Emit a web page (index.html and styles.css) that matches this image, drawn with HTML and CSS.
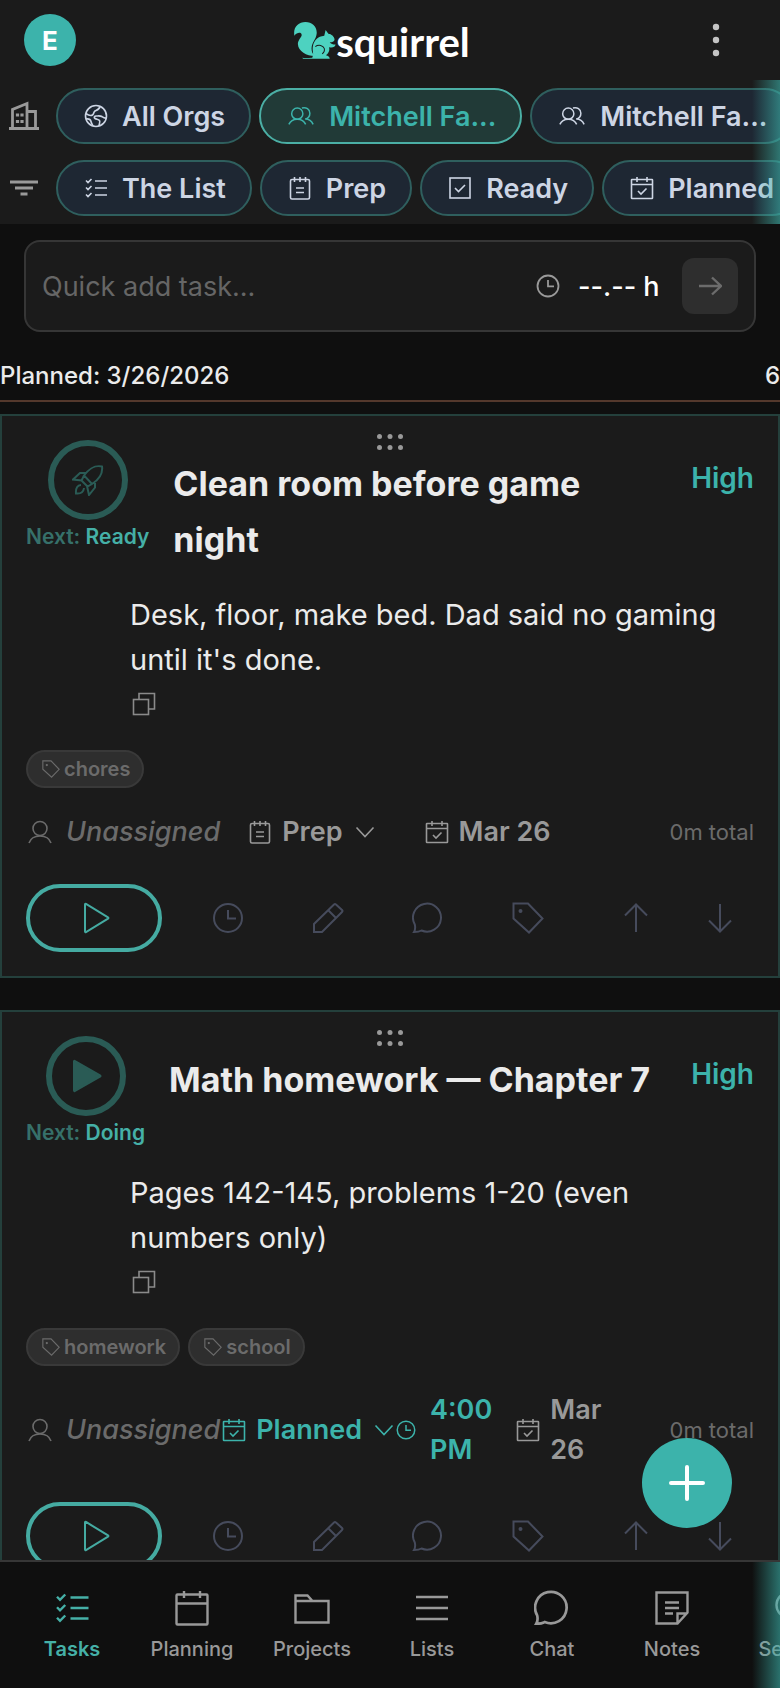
FILE: index.html
```html
<!DOCTYPE html>
<html lang="en">
<head>
  <meta charset="UTF-8">
  <meta name="viewport" content="width=device-width, initial-scale=1.0">
  <title>squirrel - Tasks</title>
  <link rel="stylesheet" href="styles.css">
</head>
<body>

  <!-- Icon sprite -->
  <svg class="sprite" aria-hidden="true">
    <symbol id="i-buildings" viewBox="0 0 32 32"><path d="M1 28.5h30M4.500 28V9.500L19 3.500V28M19 11.500h8.500V28"/><path d="M9.500 13.500v3M14 13.500v3M9.500 20v3M14 20v3" stroke-width="3.200"/></symbol>
    <symbol id="i-filter" viewBox="0 0 32 32"><path d="M2 10h28M7 16h18M12.500 22h7"/></symbol>
    <symbol id="i-globe" viewBox="0 0 24 24"><circle cx="12" cy="12" r="10.500"/><path d="M16 2.500c-.5 3-3 3.500-5 4.500-1.500 1-1 3-2.500 4S4 11 1.800 9.500M22.300 14c-2 .5-3-.5-4.500-1.500s-4-.5-5.800-.5c-1.500 0-2.500 1.500-1 2.500s3.500.5 4.500 2-.5 3.500-.5 5.500M2 15c3-.5 4.500.5 5 2.500.3 1.500 1.500 3 2 4.500"/></symbol>
    <symbol id="i-people" viewBox="0 0 30 24"><circle cx="11" cy="9.500" r="6"/><path d="M2 21c1.500-3.500 5-5.500 9-5.500s7.500 2 9 5.500M16 3.500c4.500-1.500 8.500 1.500 8.500 5.500 0 3-2 5.500-5 6.200 4 0 7 2.300 8.500 5.800"/></symbol>
    <symbol id="i-checklist" viewBox="0 0 24 24"><path d="M11 5h12M11 12h12M11 19h12M2 4.500l2 2L7.500 3M2 11.500l2 2L7.500 10M2 18.500l2 2L7.500 17"/></symbol>
    <symbol id="i-notepad" viewBox="0 0 24 24"><rect x="2.500" y="3.500" width="19" height="19.500" rx="1.500"/><path d="M6.500 1v5M12 1v5M17.500 1v5M8 12h8M8 16.500h8"/></symbol>
    <symbol id="i-checkbox" viewBox="0 0 24 24"><rect x="2" y="2" width="20" height="20"/><path d="M7 12l3.500 3.500L17 9"/></symbol>
    <symbol id="i-calcheck" viewBox="0 0 24 24"><rect x="1.500" y="3.500" width="21" height="19" rx=".5"/><path d="M1.500 8.500h21M7 1v5M17 1v5M8 15l3 3 5.500-5.500"/></symbol>
    <symbol id="i-calendar" viewBox="0 0 36 36"><rect x="2.500" y="4.500" width="31" height="30" rx="1"/><path d="M2.500 13.500h31M10 1v7M26 1v7"/></symbol>
    <symbol id="i-clock" viewBox="0 0 32 32"><circle cx="16" cy="16" r="14"/><path d="M16 8v8.500h8"/></symbol>
    <symbol id="i-right" viewBox="0 0 24 24"><path d="M1 12h22M14 3.500l9 8.500-9 8.500"/></symbol>
    <symbol id="i-rocket" viewBox="0 0 32 32"><path d="M30 2.500c-7-1.500-12 1-18 9l8 8.500c8-5 11-10.500 10-17.500zM14 9H8l-7 6.500 9 1M23 17v6.500L17 31l-2-9M9 21c-3.500 0-5.500 3-5 8.500 5 .5 7.500-1.500 8-5.500M12 11.500L9.500 16.500l6 6 4.500-2.500"/></symbol>
    <symbol id="i-playfill" viewBox="0 0 32 36"><path d="M4 3.500v29c0 .5.500.8 1 .5l25-14.300c.7-.4.700-1 0-1.400L5 3c-.5-.3-1 0-1 .5z" fill="currentColor"/></symbol>
    <symbol id="i-play" viewBox="0 0 32 32"><path d="M7 2.500v27c0 .5.400.8 1 .5l22-13.300c.6-.4.600-1 0-1.400L8 2c-.6-.3-1 0-1 .5z"/></symbol>
    <symbol id="i-copy" viewBox="0 0 24 24"><rect x="1.500" y="7.500" width="15" height="15"/><path d="M7 7V1.500h15.500V17h-6"/></symbol>
    <symbol id="i-tag" viewBox="0 0 32 32"><path d="M1.500 1.500H16l14.500 15L17 30.500 1.500 16.500z"/><circle cx="8.500" cy="9" r="1.300" fill="currentColor" stroke="none"/><circle cx="8.500" cy="9" r="1"/></symbol>
    <symbol id="i-user" viewBox="0 0 24 24"><circle cx="12" cy="8.500" r="7"/><path d="M1 23c1.500-4.500 5.500-7 11-7s9.500 2.500 11 7"/></symbol>
    <symbol id="i-chevron" viewBox="0 0 24 24"><path d="M3.500 7.500L12 16.500l8.500-9"/></symbol>
    <symbol id="i-pencil" viewBox="0 0 32 32"><path d="M2 30v-8L22 2.500c.7-.7 1.300-.7 2 0L30 8c.7.700.7 1.300 0 2L10 30zM16.500 8.500l7 7"/></symbol>
    <symbol id="i-chat" viewBox="0 0 32 32"><path d="M2 30c1.500-2.500 1.500-4.500.8-7.500A14 14 0 1 1 9.500 28.500C7 30 5 30 2 30z"/></symbol>
    <symbol id="i-up" viewBox="0 0 32 32"><path d="M16 30V2.500M5 13.500l11-11 11 11"/></symbol>
    <symbol id="i-down" viewBox="0 0 32 32"><path d="M16 2v27.500M5 18.500l11 11 11-11"/></symbol>
    <symbol id="i-folder" viewBox="0 0 36 36"><path d="M1.500 32.500v-27h12l5 5.500h16v21.500zM1.500 11h17"/></symbol>
    <symbol id="i-lines" viewBox="0 0 36 36"><path d="M2 7h32M2 18h32M2 29h32"/></symbol>
    <symbol id="i-note" viewBox="0 0 36 36"><path d="M2.500 33.500v-31h31v20l-10 11zM23.500 33v-9.500h9.500M11 12.500h14M11 18h14M11 23.500h8"/></symbol>
    <symbol id="i-search" viewBox="0 0 36 36"><circle cx="15" cy="15" r="12.500"/><path d="M24 24l10 10"/></symbol>
    <symbol id="i-plus" viewBox="0 0 36 36"><path d="M18 2v32M2 18h32"/></symbol>
    <symbol id="i-grip" viewBox="0 0 28 18"><g fill="currentColor" stroke="none"><circle cx="3.500" cy="3.500" r="2.500"/><circle cx="14" cy="3.500" r="2.500"/><circle cx="24.500" cy="3.500" r="2.500"/><circle cx="3.500" cy="14.500" r="2.500"/><circle cx="14" cy="14.500" r="2.500"/><circle cx="24.500" cy="14.500" r="2.500"/></g></symbol>
    <symbol id="i-more" viewBox="0 0 8 34"><g fill="currentColor" stroke="none"><circle cx="4" cy="4" r="3.200"/><circle cx="4" cy="17" r="3.200"/><circle cx="4" cy="30" r="3.200"/></g></symbol>
  </svg>

  <!-- Top bar -->
  <header class="topbar">
    <button class="avatar" type="button">E</button>
    <div class="brand">
      <svg class="brand-mark" viewBox="0 0 122 108" aria-hidden="true">
        <path d="M1 40C-4 16 12 0 33 0c20 0 34 13 33 33-1 17-14 26-15 43-.5 10 3 17 9 23C37 99 12 86 11 64c0-12 12-20 11-27-1-8-14-7-21 3z"/>
        <path d="M24 104c8 2 19 0 29 0 6-13-1-19 2-34 3-16 14-28 33-30l4-17 8 11c9 1 17 8 18 16 .5 7-8 9-14 9 3 5 9 7 17 7-1 8-9 10-19 8 3 10-2 18-9 23 6 1 11 5 11 10H26z"/>
        <path class="brand-cut" d="M62 72c9-7 23-4 26 5 2 7-1 12-6 16"/>
      </svg>
      <span class="brand-name">squirrel</span>
    </div>
    <button class="more" type="button" aria-label="More"><svg><use href="#i-more"/></svg></button>
  </header>

  <!-- Org and stage filters -->
  <section class="filters">
    <div class="filter-row">
      <svg class="row-icon"><use href="#i-buildings"/></svg>
      <button class="pill" type="button"><svg><use href="#i-globe"/></svg>All Orgs</button>
      <button class="pill active" type="button"><svg class="wide"><use href="#i-people"/></svg>Mitchell Fa...</button>
      <button class="pill" type="button"><svg class="wide"><use href="#i-people"/></svg>Mitchell Fa...</button>
    </div>
    <div class="filter-row">
      <svg class="row-icon"><use href="#i-filter"/></svg>
      <button class="pill" type="button"><svg><use href="#i-checklist"/></svg>The List</button>
      <button class="pill" type="button"><svg><use href="#i-notepad"/></svg>Prep</button>
      <button class="pill" type="button"><svg><use href="#i-checkbox"/></svg>Ready</button>
      <button class="pill" type="button"><svg><use href="#i-calcheck"/></svg>Planned</button>
    </div>
  </section>

  <main class="content">
    <form class="quick-add">
      <input class="quick-title" type="text" placeholder="Quick add task..." aria-label="Quick add task">
      <label class="quick-time">
        <svg><use href="#i-clock"/></svg>
        <input type="text" value="--.-- h" aria-label="Hours">
      </label>
      <button type="button" aria-label="Add"><svg><use href="#i-right"/></svg></button>
    </form>

    <div class="group-head">
      <h2>Planned: 3/26/2026</h2>
      <span>6</span>
    </div>

    <article class="task">
      <svg class="grip"><use href="#i-grip"/></svg>
      <div class="task-head">
        <div class="next">
          <button type="button" aria-label="Move to Ready"><svg><use href="#i-rocket"/></svg></button>
          <span class="next-label">Next: <b>Ready</b></span>
        </div>
        <h3>Clean room before game night</h3>
        <span class="priority">High</span>
      </div>
      <div class="task-desc">
        <p>Desk, floor, make bed. Dad said no gaming until it's done.</p>
        <button type="button" aria-label="Copy"><svg><use href="#i-copy"/></svg></button>
      </div>
      <div class="tags">
        <span class="tag"><svg><use href="#i-tag"/></svg>chores</span>
      </div>
      <div class="meta">
        <span class="assignee"><svg><use href="#i-user"/></svg>Unassigned</span>
        <label class="stage spaced">
          <svg><use href="#i-notepad"/></svg>
          <select aria-label="Stage"><option>Prep</option></select>
          <svg class="chevron"><use href="#i-chevron"/></svg>
        </label>
        <span class="due roomy"><svg><use href="#i-calcheck"/></svg>Mar 26</span>
        <span class="total">0m total</span>
      </div>
      <div class="actions">
        <button class="play" type="button" aria-label="Start"><svg><use href="#i-play"/></svg></button>
        <div class="tools">
          <button type="button" aria-label="Time"><svg><use href="#i-clock"/></svg></button>
          <button type="button" aria-label="Edit"><svg><use href="#i-pencil"/></svg></button>
          <button type="button" aria-label="Comment"><svg><use href="#i-chat"/></svg></button>
          <button type="button" aria-label="Tag"><svg><use href="#i-tag"/></svg></button>
        </div>
        <div class="move">
          <button type="button" aria-label="Move up"><svg><use href="#i-up"/></svg></button>
          <button type="button" aria-label="Move down"><svg><use href="#i-down"/></svg></button>
        </div>
      </div>
    </article>

    <article class="task">
      <svg class="grip"><use href="#i-grip"/></svg>
      <div class="task-head">
        <div class="next">
          <button type="button" aria-label="Move to Doing"><svg class="filled"><use href="#i-playfill"/></svg></button>
          <span class="next-label">Next: <b>Doing</b></span>
        </div>
        <h3>Math homework — Chapter 7</h3>
        <span class="priority">High</span>
      </div>
      <div class="task-desc">
        <p>Pages 142-145, problems 1-20 (even numbers only)</p>
        <button type="button" aria-label="Copy"><svg><use href="#i-copy"/></svg></button>
      </div>
      <div class="tags">
        <span class="tag"><svg><use href="#i-tag"/></svg>homework</span>
        <span class="tag"><svg><use href="#i-tag"/></svg>school</span>
      </div>
      <div class="meta">
        <span class="assignee"><svg><use href="#i-user"/></svg>Unassigned</span>
        <label class="stage planned">
          <svg><use href="#i-calcheck"/></svg>
          <select aria-label="Stage"><option>Planned</option></select>
          <svg class="chevron"><use href="#i-chevron"/></svg>
        </label>
        <span class="time"><svg><use href="#i-clock"/></svg><span>4:00<br>PM</span></span>
        <span class="due"><svg><use href="#i-calcheck"/></svg><span>Mar<br>26</span></span>
        <span class="total">0m total</span>
      </div>
      <div class="actions">
        <button class="play" type="button" aria-label="Start"><svg><use href="#i-play"/></svg></button>
        <div class="tools">
          <button type="button" aria-label="Time"><svg><use href="#i-clock"/></svg></button>
          <button type="button" aria-label="Edit"><svg><use href="#i-pencil"/></svg></button>
          <button type="button" aria-label="Comment"><svg><use href="#i-chat"/></svg></button>
          <button type="button" aria-label="Tag"><svg><use href="#i-tag"/></svg></button>
        </div>
        <div class="move">
          <button type="button" aria-label="Move up"><svg><use href="#i-up"/></svg></button>
          <button type="button" aria-label="Move down"><svg><use href="#i-down"/></svg></button>
        </div>
      </div>
    </article>
  </main>

  <!-- Bottom navigation -->
  <div class="bottom">
    <button class="fab" type="button" aria-label="New task"><svg><use href="#i-plus"/></svg></button>
    <nav class="tabs">
      <a class="current" href="#"><svg><use href="#i-checklist"/></svg>Tasks</a>
      <a href="#"><svg><use href="#i-calendar"/></svg>Planning</a>
      <a href="#"><svg><use href="#i-folder"/></svg>Projects</a>
      <a href="#"><svg><use href="#i-lines"/></svg>Lists</a>
      <a href="#"><svg><use href="#i-chat"/></svg>Chat</a>
      <a href="#"><svg><use href="#i-note"/></svg>Notes</a>
      <a href="#"><svg><use href="#i-search"/></svg>Search</a>
    </nav>
  </div>

</body>
</html>
```
FILE: styles.css
```css
* {
  box-sizing: border-box;
}

body {
  margin: 0;
  height: 100vh;
  display: flex;
  flex-direction: column;
  overflow: hidden;
  background-color: #0f0f0f;
  color: #ebebeb;
  font-family: Inter, "Liberation Sans", sans-serif;
  font-size: 28px;
}

button,
input,
select {
  font: inherit;
  color: inherit;
  background: none;
  border: none;
  padding: 0;
  margin: 0;
  outline: none;
}

button {
  display: flex;
  align-items: center;
  justify-content: center;
  cursor: pointer;
}

h2,
h3,
p {
  margin: 0;
}

svg {
  display: block;
  flex: none;
  width: 24px;
  height: 24px;
  fill: none;
  stroke: currentColor;
  stroke-width: 1.6;
}

.sprite {
  position: absolute;
  width: 0;
  height: 0;
}

/* Top bar */
.topbar {
  flex: none;
  display: flex;
  align-items: center;
  justify-content: space-between;
  height: 80px;
  padding: 0 36px 0 24px;
  background-color: #1b1b1b;
}

.avatar {
  width: 52px;
  height: 52px;
  border-radius: 50%;
  background-color: #3cb3ab;
  color: #fff;
  font-size: 26px;
  font-weight: 700;
}

.brand {
  display: flex;
  align-items: center;
}

.brand-mark {
  width: 42px;
  height: 37px;
  fill: #4dd2c0;
  stroke: none;
}

.brand-mark .brand-cut {
  fill: none;
  stroke: #1b1b1b;
  stroke-width: 3;
}

.brand-name {
  padding-top: 4px;
  color: #fff;
  font-family: Lato, sans-serif;
  font-size: 40px;
  font-weight: 700;
  line-height: 44px;
}

.more {
  width: 56px;
  height: 52px;
  color: #c4c4c4;
}

.more svg {
  width: 8px;
  height: 34px;
}

/* Filters */
.filters {
  flex: none;
  position: relative;
  background-color: #1b1b1b;
}

.filter-row {
  display: flex;
  align-items: center;
  gap: 8px;
  padding: 8px;
  overflow: hidden;
}

.filters::after,
.tabs::after {
  content: "";
  position: absolute;
  top: 0;
  right: 0;
  bottom: 0;
  width: 28px;
  background: linear-gradient(to right, transparent, rgba(60, 179, 171, 0.6));
  pointer-events: none;
}

.row-icon {
  width: 32px;
  height: 32px;
  margin-right: 8px;
  color: #9a9a9a;
  stroke-width: 2.8;
}

.pill {
  flex: none;
  gap: 14px;
  height: 56px;
  padding: 0 24px 0 26px;
  border: 2px solid #2f5f5e;
  border-radius: 28px;
  background-color: #1e2733;
  color: #cdd5e4;
  font-size: 27px;
  font-weight: 600;
}

.pill.active {
  background-color: #213a37;
  border-color: #4bafa5;
  color: #3cb3ab;
}

.pill .wide {
  width: 28px;
}

/* Quick add */
.content {
  flex: 1;
  min-height: 0;
  overflow: hidden;
}

.quick-add {
  display: flex;
  align-items: center;
  margin: 16px 24px 24px;
  height: 92px;
  padding: 0 16px;
  border: 2px solid #363636;
  border-radius: 16px;
  background-color: #1b1b1b;
  font-size: 27px;
}

.quick-title {
  flex: 1;
  min-width: 0;
}

.quick-title::placeholder {
  color: #666;
  opacity: 1;
}

.quick-time {
  display: flex;
  align-items: center;
  gap: 18px;
}

.quick-time svg {
  color: #9a9a9a;
  stroke-width: 2.4;
}

.quick-time input {
  width: 104px;
  color: #fff;
  font-weight: 500;
}

.quick-add button {
  width: 56px;
  height: 56px;
  border-radius: 12px;
  background-color: #2e2e2e;
  color: #6c6c6c;
}

.quick-add button svg {
  stroke-width: 2.4;
}

.group-head {
  display: flex;
  align-items: center;
  justify-content: space-between;
  height: 46px;
  padding-bottom: 6px;
  margin-bottom: 12px;
  border-bottom: 2px solid #54382c;
  font-size: 24px;
  font-weight: 500;
}

.group-head h2 {
  font: inherit;
}

/* Task cards */
.task {
  position: relative;
  margin-bottom: 32px;
  padding: 24px;
  border: 2px solid #24403c;
  background-color: #1b1b1b;
}

.grip {
  position: absolute;
  top: 17px;
  left: 50%;
  width: 28px;
  height: 18px;
  margin-left: -14px;
  color: #999;
}

.task-head {
  display: flex;
  align-items: flex-start;
  gap: 24px;
}

.next {
  display: flex;
  flex-direction: column;
  align-items: center;
  gap: 4px;
}

.next button {
  width: 80px;
  height: 80px;
  border: 6px solid #2a5b55;
  border-radius: 50%;
  color: #2a5b55;
}

.next svg {
  width: 32px;
  height: 32px;
  stroke-width: 2;
}

.next .filled {
  height: 36px;
}

.next-label {
  color: #36706a;
  font-size: 21px;
  font-weight: 600;
  line-height: 26px;
}

.next-label b {
  color: #45b0a7;
  font-weight: 600;
}

.task h3 {
  flex: 1;
  padding-top: 16px;
  font-size: 34px;
  font-weight: 700;
  line-height: 56px;
}

.priority {
  padding-top: 20px;
  color: #3cb3ab;
  font-weight: 600;
  line-height: 36px;
}

.task-desc {
  margin: 24px 0 30px;
  padding-left: 104px;
  font-size: 29px;
  line-height: 45px;
}

.task-desc button {
  width: 28px;
  height: 38px;
  padding-top: 6px;
  color: #8a8a8a;
}

.tags {
  display: flex;
  gap: 8px;
}

.tag {
  display: flex;
  align-items: center;
  gap: 4px;
  height: 38px;
  padding: 0 12px 0 14px;
  border: 2px solid #393939;
  border-radius: 19px;
  background-color: #2e2e2e;
  color: #6b6b6b;
  font-size: 20px;
  font-weight: 600;
}

.tag svg {
  width: 18px;
  height: 18px;
  stroke-width: 2;
}

.meta {
  display: flex;
  align-items: center;
  margin: 24px 0 32px;
  color: #999;
  font-size: 27px;
  font-weight: 600;
  line-height: 40px;
}

.assignee {
  display: flex;
  align-items: center;
  gap: 14px;
  padding-left: 2px;
  color: #6b6b6b;
  font-style: italic;
  font-weight: 500;
}

.stage {
  display: flex;
  align-items: center;
  gap: 10px;
  margin-left: 2px;
}

.stage.spaced {
  margin-left: 28px;
}

.stage select {
  appearance: none;
  field-sizing: content;
  height: 40px;
}

.planned,
.time {
  color: #3cb3ab;
}

.time,
.due {
  display: flex;
  align-items: center;
  gap: 10px;
}

.time {
  gap: 14px;
}

.time svg {
  width: 20px;
  height: 20px;
  stroke-width: 2.4;
}

.due {
  margin-left: 24px;
}

.due.roomy {
  margin-left: 48px;
}

.total {
  margin-left: auto;
  color: #6b6b6b;
  font-size: 22px;
  font-weight: 400;
}

.actions {
  display: flex;
  align-items: center;
  gap: 24px;
  color: #464b5c;
}

.actions svg {
  width: 32px;
  height: 32px;
  stroke-width: 2;
}

.play {
  width: 136px;
  height: 68px;
  border: 4px solid #45aba2;
  border-radius: 34px;
  color: #45aba2;
}

.tools {
  flex: 1;
  display: flex;
  gap: 16px;
}

.tools button {
  flex: 1;
  height: 68px;
}

.move {
  display: flex;
  gap: 16px;
  padding-left: 8px;
}

.move button {
  width: 68px;
  height: 68px;
}

/* Bottom navigation */
.bottom {
  flex: none;
  position: relative;
}

.fab {
  position: absolute;
  right: 48px;
  bottom: 160px;
  width: 90px;
  height: 90px;
  border-radius: 50%;
  background-color: #3cb3ab;
  color: #fff;
}

.fab svg {
  width: 36px;
  height: 36px;
  stroke-width: 4;
  stroke-linecap: round;
}

.tabs {
  position: relative;
  display: flex;
  height: 128px;
  padding: 0 12px;
  border-top: 2px solid #363636;
  background-color: #0f0f0f;
  overflow: hidden;
}

.tabs a {
  flex: none;
  display: flex;
  flex-direction: column;
  align-items: center;
  gap: 8px;
  width: 120px;
  padding-top: 28px;
  color: #999;
  font-size: 20px;
  font-weight: 500;
  line-height: 30px;
  text-decoration: none;
}

.tabs svg {
  width: 36px;
  height: 36px;
  stroke-width: 2.4;
}

.tabs .current {
  color: #45b0a7;
  font-weight: 600;
}

.tabs .current svg {
  stroke-width: 1.6;
}
```
